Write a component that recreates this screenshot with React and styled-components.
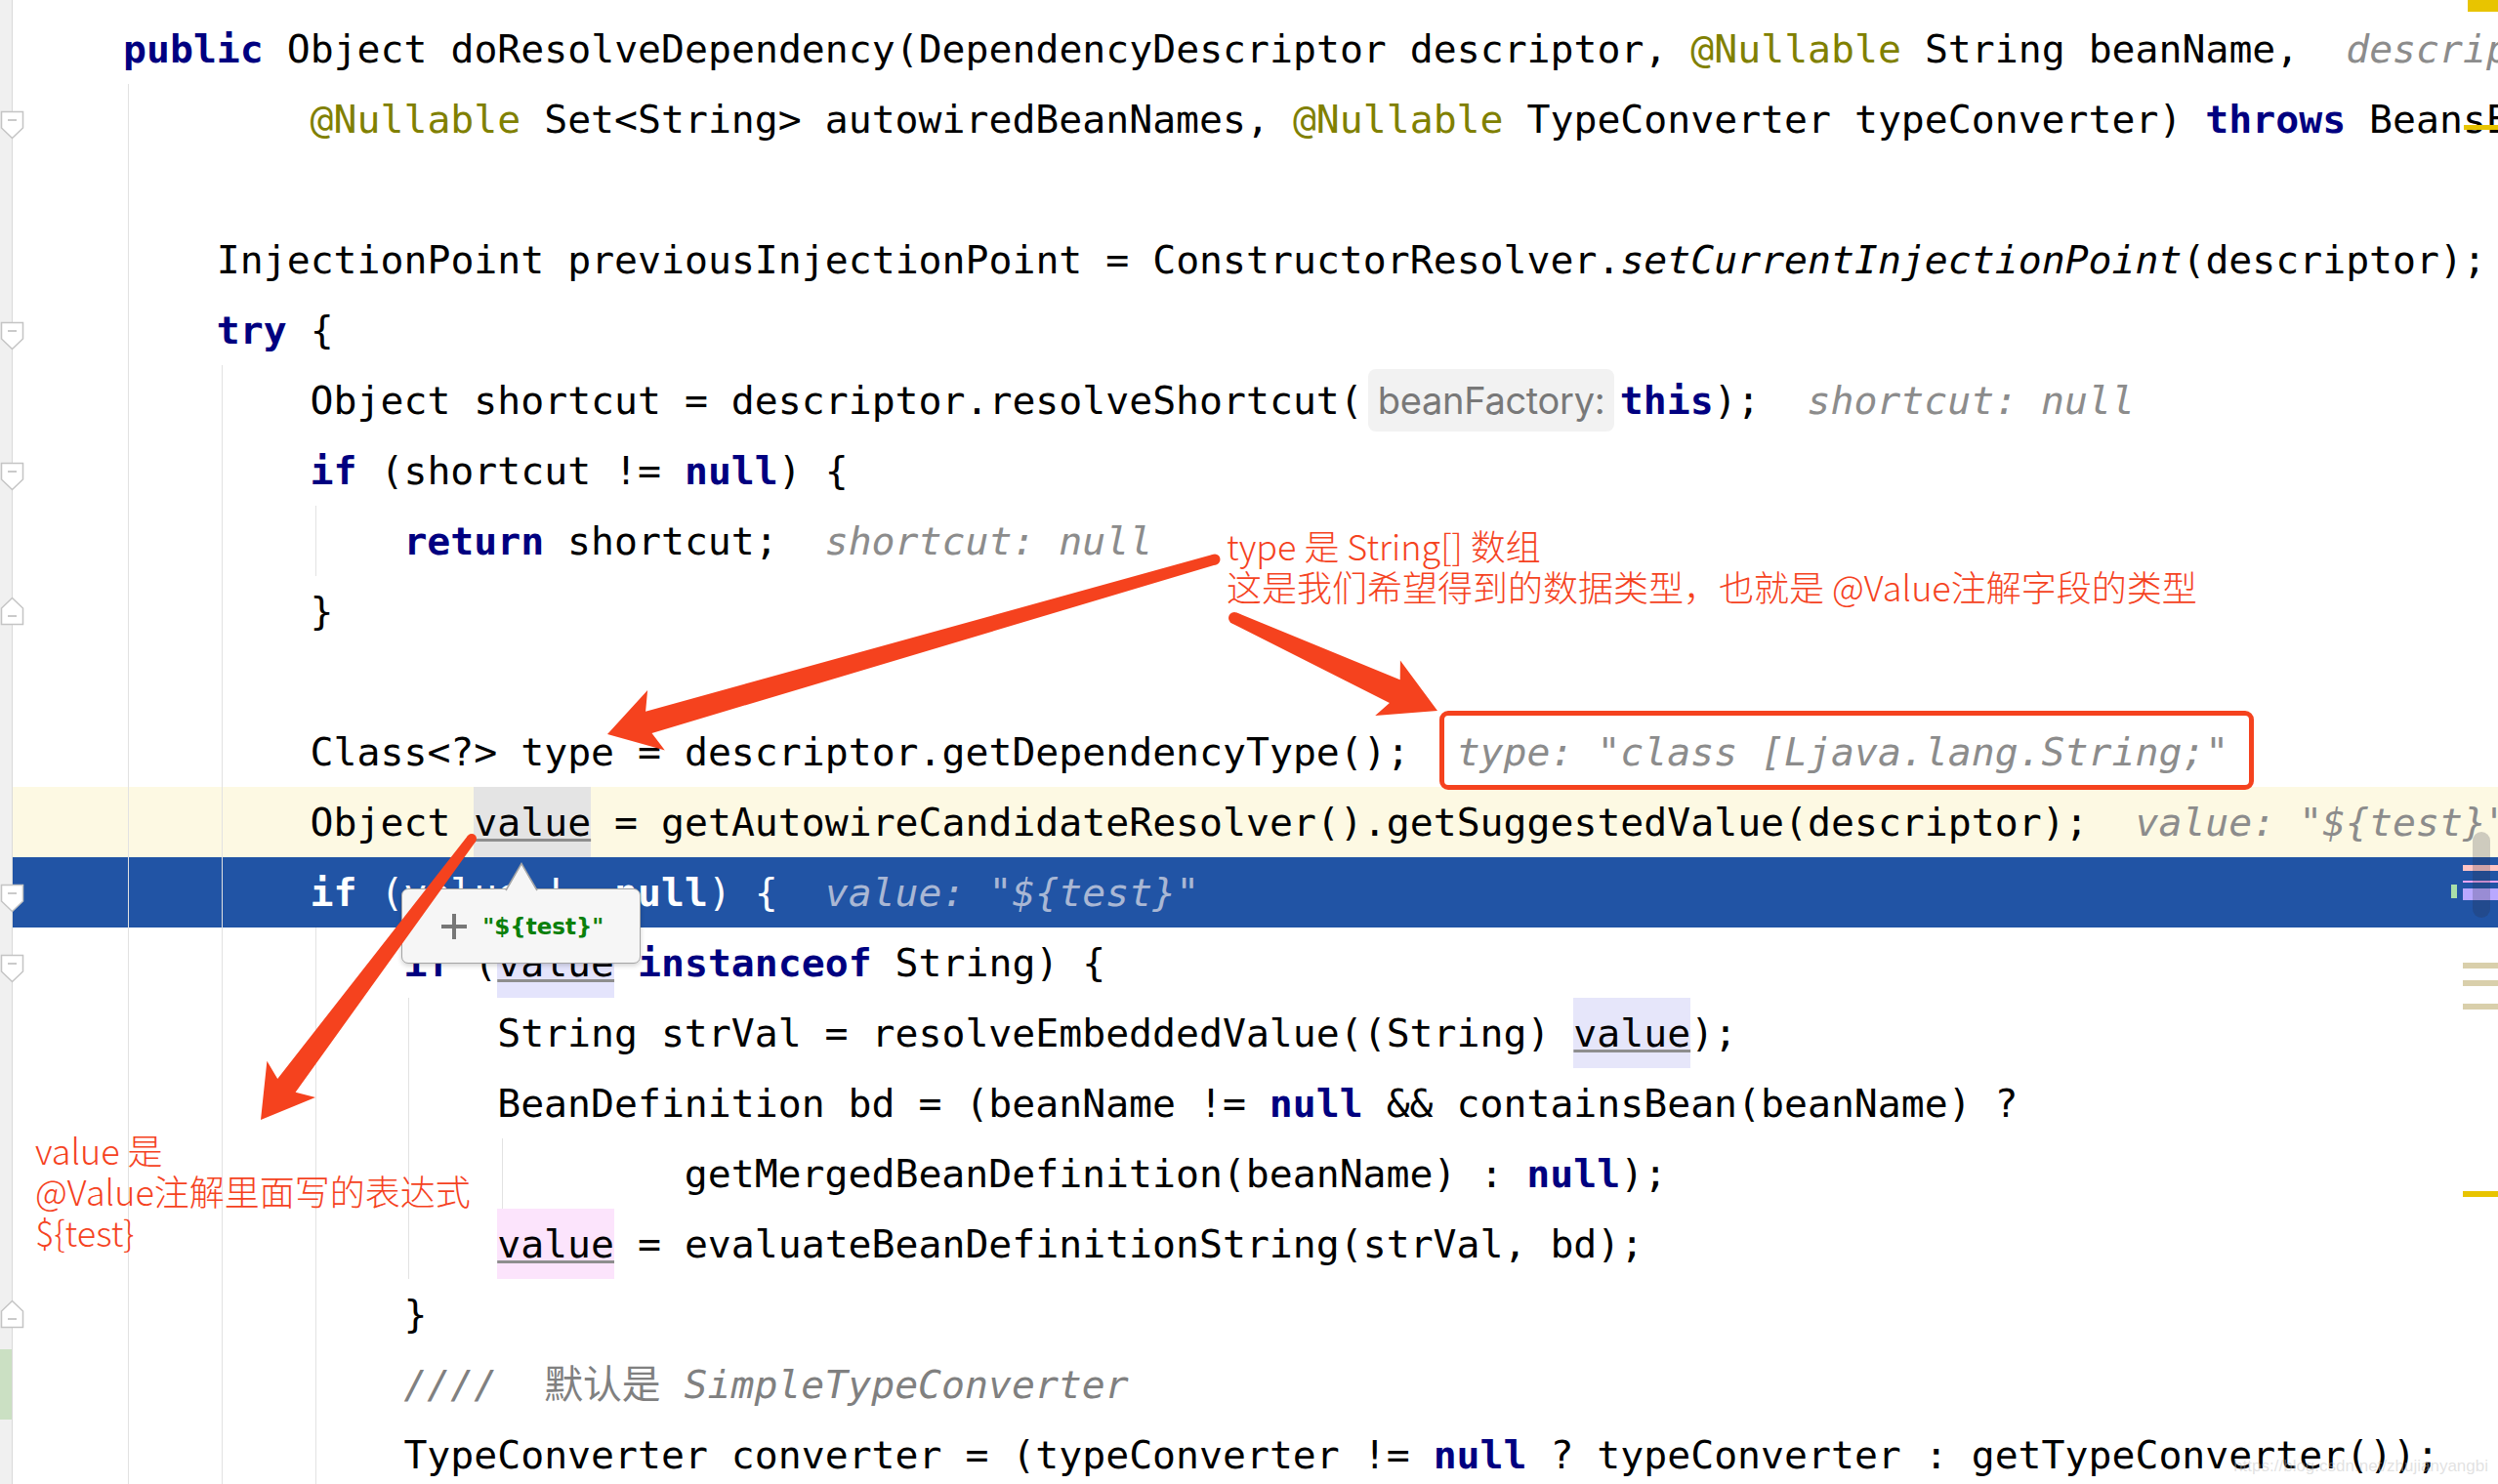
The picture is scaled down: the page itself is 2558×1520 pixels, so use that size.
import React from 'react';
import styled, { createGlobalStyle, css } from 'styled-components';

const MONO = `"DejaVu Sans Mono", "Noto Sans CJK SC", monospace`;
const NOTE_FONT = `"Noto Sans CJK SC", "Noto Sans", sans-serif`;
const RED = '#f5421e';

const GlobalStyle = createGlobalStyle`
  html, body {
    margin: 0;
    padding: 0;
    background: #fff;
  }
  body {
    width: 2558px;
    height: 1520px;
    overflow: hidden;
  }
`;

const Editor = styled.div`
  position: relative;
  width: 2558px;
  height: 1520px;
  overflow: hidden;
  box-sizing: border-box;
  padding-top: 14px;
  background: linear-gradient(to right, #f0f0f0 0 12px, #dadada 12px 13px, #fff 13px);
  font-family: ${MONO};
  font-size: 39.8px;
  color: #000;
`;

const Line = styled.div`
  display: flex;
  height: 72px;
`;

const GutterCell = styled.div`
  position: relative;
  flex: 0 0 13px;
  background: ${p => (p.$changed ? 'linear-gradient(to right, #cbe0c3 0 12px, transparent 12px)' : 'transparent')};
`;

const FoldMark = styled.svg`
  position: absolute;
  z-index: 2;
  left: 0;
  top: ${p => p.$top}px;
`;

const Kw = styled.span`
  font-weight: bold;
  color: #000080;
`;

const Ann = styled.span`
  color: #808000;
`;

const Ital = styled.span`
  font-style: italic;
`;

const Hint = styled.span`
  font-style: italic;
  color: #8c8c8c;
`;

const Comment = styled.span`
  font-style: italic;
  color: #808080;
`;

const Cjk = styled.span`
  font-style: normal;
`;

const Indent = styled.span`
  display: inline-block;
  vertical-align: top;
  box-sizing: border-box;
  width: 90.8px;
  height: 72px;
  margin-left: 5px;
  border-left: 1px solid ${p => (p.$guide ? '#e2e2e2' : 'transparent')};
`;

const CodeCell = styled.div`
  flex: 1;
  min-width: 0;
  padding-left: 113px;
  white-space: pre;
  line-height: 72px;
  background: ${p => (p.$mark === 'caret' ? '#fdf9e3' : p.$mark === 'exec' ? '#2154a5' : 'transparent')};
  ${p =>
    p.$mark === 'exec' &&
    css`
      color: #fff;
      ${Kw} {
        color: #fff;
      }
      ${Hint} {
        color: #a9b7d4;
      }
    `}
`;

const ParamHint = styled.span`
  display: inline-block;
  vertical-align: top;
  box-sizing: border-box;
  width: 252px;
  height: 64px;
  margin: 4px 6px 0 5px;
  padding-left: 10px;
  border-radius: 8px;
  background: #f2f2f2;
  font-family: Inter, "Noto Sans", sans-serif;
  font-size: 38px;
  line-height: 64px;
  letter-spacing: -0.3px;
  color: #787878;
`;

const BoxedHint = styled.span`
  position: relative;
  display: inline-block;
  vertical-align: top;
  font-style: italic;
  color: #8c8c8c;
  &::after {
    content: '';
    position: absolute;
    top: -6px;
    bottom: -3px;
    left: -18px;
    right: -26px;
    border: 5px solid ${RED};
    border-radius: 9px;
  }
`;

const Ref = styled.span`
  position: relative;
  display: inline-block;
  vertical-align: top;
  background: ${p => p.$bg};
  text-decoration: underline;
  text-decoration-color: #8e8e8e;
  text-decoration-thickness: 3px;
  text-underline-offset: 3px;
`;

const Tooltip = styled.div`
  position: absolute;
  z-index: 5;
  top: 104px;
  left: -74px;
  width: 245px;
  height: 77px;
  box-sizing: border-box;
  display: flex;
  align-items: center;
  gap: 16px;
  padding-left: 40px;
  background: #f6f6f6;
  border: 1.5px solid #a5a5a5;
  border-radius: 7px;
  box-shadow: 0 2px 5px rgba(0, 0, 0, 0.18);
  line-height: normal;
  white-space: nowrap;
`;

const TipPointer = styled.svg`
  position: absolute;
  left: 104px;
  top: -28.5px;
`;

const TipValue = styled.span`
  font-family: "DejaVu Sans", sans-serif;
  font-weight: bold;
  font-size: 23px;
  color: #0b800b;
`;

const Overlay = styled.svg`
  position: absolute;
  z-index: 10;
  left: 0;
  top: 0;
  pointer-events: none;
`;

const Note = styled.div`
  position: absolute;
  z-index: 11;
  left: ${p => p.$x}px;
  top: ${p => p.$y}px;
  font-family: ${NOTE_FONT};
  font-size: 36px;
  font-weight: 300;
  line-height: 42px;
  color: ${RED};
  white-space: pre;
`;

const Stripe = styled.div`
  position: absolute;
  z-index: 6;
  top: 0;
  right: 0;
  width: 48px;
  height: 100%;
`;

const Mark = styled.div`
  position: absolute;
  left: ${p => p.$x}px;
  top: ${p => p.$y}px;
  width: ${p => p.$w}px;
  height: ${p => p.$h}px;
  background: ${p => p.$c};
  border-radius: ${p => p.$r || 0}px;
`;

const Watermark = styled.div`
  position: absolute;
  z-index: 7;
  right: 10px;
  bottom: 8px;
  font-family: "Liberation Sans", Arial, sans-serif;
  font-size: 17px;
  color: rgba(190, 190, 190, 0.45);
`;

// token helpers
const K = s => ({ k: 'kw', s });
const A = s => ({ k: 'ann', s });
const I = s => ({ k: 'it', s });
const H = s => ({ k: 'hint', s });
const P = s => ({ k: 'param', s });
const B = s => ({ k: 'boxed', s });
const R = (s, bg, tip) => ({ k: 'ref', s, bg, tip });
const C = (s, cjk) => ({ k: 'cmt', s, cjk });

const LINES = [
  { indent: 0, guides: 0, tokens: [K('public'), ' Object doResolveDependency(DependencyDescriptor descriptor, ', A('@Nullable'), ' String beanName,  ', H('descriptor: DependencyDescriptor@1523  beanName: "test"')] },
  { indent: 2, guides: 1, fold: 'down', tokens: [A('@Nullable'), ' Set<String> autowiredBeanNames, ', A('@Nullable'), ' TypeConverter typeConverter) ', K('throws'), ' BeansException {'] },
  { indent: 0, guides: 1, tokens: [] },
  { indent: 1, guides: 1, tokens: ['InjectionPoint previousInjectionPoint = ConstructorResolver.', I('setCurrentInjectionPoint'), '(descriptor);'] },
  { indent: 1, guides: 1, fold: 'down', tokens: [K('try'), ' {'] },
  { indent: 2, guides: 2, tokens: ['Object shortcut = descriptor.resolveShortcut(', P('beanFactory:'), K('this'), ');  ', H('shortcut: null')] },
  { indent: 2, guides: 2, fold: 'down', tokens: [K('if'), ' (shortcut != ', K('null'), ') {'] },
  { indent: 3, guides: 3, tokens: [K('return'), ' shortcut;  ', H('shortcut: null')] },
  { indent: 2, guides: 2, fold: 'up', tokens: ['}'] },
  { indent: 0, guides: 2, tokens: [] },
  { indent: 2, guides: 2, tokens: ['Class<?> type = descriptor.getDependencyType();  ', B('type: "class [Ljava.lang.String;"')] },
  { indent: 2, guides: 2, mark: 'caret', tokens: ['Object ', R('value', '#e4e4e4', '"${test}"'), ' = getAutowireCandidateResolver().getSuggestedValue(descriptor);  ', H('value: "${test}"')] },
  { indent: 2, guides: 2, mark: 'exec', fold: 'down', tokens: [K('if'), ' (value != ', K('null'), ') {  ', H('value: "${test}"')] },
  { indent: 3, guides: 3, fold: 'down', tokens: [K('if'), ' (', R('value', '#e4e4fc'), ' ', K('instanceof'), ' String) {'] },
  { indent: 4, guides: 4, tokens: ['String strVal = resolveEmbeddedValue((String) ', R('value', '#e6e6fa'), ');'] },
  { indent: 4, guides: 4, tokens: ['BeanDefinition bd = (beanName != ', K('null'), ' && containsBean(beanName) ?'] },
  { indent: 6, guides: 5, tokens: ['getMergedBeanDefinition(beanName) : ', K('null'), ');'] },
  { indent: 4, guides: 4, tokens: [R('value', '#fce4fc'), ' = evaluateBeanDefinitionString(strVal, bd);'] },
  { indent: 3, guides: 3, fold: 'up', tokens: ['}'] },
  { indent: 3, guides: 3, changed: true, tokens: [C('////  '), C('默认是', true), C(' SimpleTypeConverter')] },
  { indent: 3, guides: 3, tokens: ['TypeConverter converter = (typeConverter != ', K('null'), ' ? typeConverter : getTypeConverter());'] },
];

function Fold({ dir }) {
  const down = dir === 'down';
  return (
    <FoldMark $top={down ? 27 : 21} width="25" height="30" viewBox="0 0 25 30">
      <path
        d={down ? 'M1.5 1.5 H23.5 V18 L12.5 28.5 L1.5 18 Z' : 'M1.5 28.5 H23.5 V12 L12.5 1.5 L1.5 12 Z'}
        fill="#fff"
        stroke="#c4c4c4"
        strokeWidth="1.5"
      />
      <line x1="8" x2="17" y1={down ? 10 : 20} y2={down ? 10 : 20} stroke="#b8b8b8" strokeWidth="1.5" />
    </FoldMark>
  );
}

function ValueTip({ text }) {
  return (
    <Tooltip>
      <TipPointer width="38" height="30" viewBox="0 0 38 30">
        <polygon points="2,30 18,1.5 34,30" fill="#f6f6f6" />
        <path d="M2 29 L18 1.5 L34 29" fill="none" stroke="#a5a5a5" strokeWidth="1.5" />
      </TipPointer>
      <svg width="26" height="26" viewBox="0 0 26 26">
        <rect x="0" y="11" width="26" height="4" fill="#777" />
        <rect x="11" y="0" width="4" height="26" fill="#777" />
      </svg>
      <TipValue>{text}</TipValue>
    </Tooltip>
  );
}

function Token({ t }) {
  if (typeof t === 'string') return t;
  switch (t.k) {
    case 'kw':
      return <Kw>{t.s}</Kw>;
    case 'ann':
      return <Ann>{t.s}</Ann>;
    case 'it':
      return <Ital>{t.s}</Ital>;
    case 'hint':
      return <Hint>{t.s}</Hint>;
    case 'param':
      return <ParamHint>{t.s}</ParamHint>;
    case 'boxed':
      return <BoxedHint>{t.s}</BoxedHint>;
    case 'cmt':
      return <Comment>{t.cjk ? <Cjk>{t.s}</Cjk> : t.s}</Comment>;
    case 'ref':
      return (
        <Ref $bg={t.bg}>
          {t.s}
          {t.tip && <ValueTip text={t.tip} />}
        </Ref>
      );
    default:
      return null;
  }
}

function CodeLine({ line }) {
  const units = [];
  const n = Math.max(line.indent, line.guides);
  for (let i = 0; i < n; i++) {
    units.push(<Indent key={i} $guide={i < line.guides} />);
  }
  return (
    <Line>
      <GutterCell $changed={line.changed}>{line.fold && <Fold dir={line.fold} />}</GutterCell>
      <CodeCell $mark={line.mark}>
        {units}
        {line.tokens.map((t, i) => (
          <Token key={i} t={t} />
        ))}
      </CodeCell>
    </Line>
  );
}

function arrowPoints([tx, ty], [px, py], tail, neck, headLen, headHalf, notch) {
  const dx = px - tx;
  const dy = py - ty;
  const len = Math.hypot(dx, dy);
  const ux = dx / len;
  const uy = dy / len;
  const nx = -uy;
  const ny = ux;
  const bx = px - ux * headLen;
  const by = py - uy * headLen;
  const kx = px - ux * (headLen - notch);
  const ky = py - uy * (headLen - notch);
  return [
    [tx + (nx * tail) / 2, ty + (ny * tail) / 2],
    [kx + (nx * neck) / 2, ky + (ny * neck) / 2],
    [bx + nx * headHalf, by + ny * headHalf],
    [px, py],
    [bx - nx * headHalf, by - ny * headHalf],
    [kx - (nx * neck) / 2, ky - (ny * neck) / 2],
    [tx - (nx * tail) / 2, ty - (ny * tail) / 2],
  ]
    .map(p => p.map(v => v.toFixed(1)).join(','))
    .join(' ');
}

const ARROWS = [
  { from: [1244, 573], to: [622, 752], tail: 11, neck: 23, headLen: 52, headHalf: 32, notch: 8 },
  { from: [1264, 633], to: [1472, 728], tail: 12, neck: 26, headLen: 56, headHalf: 31, notch: 8 },
  { from: [483, 859], to: [267, 1147], tail: 10, neck: 23, headLen: 52, headHalf: 31, notch: 8 },
];

function Arrows() {
  return (
    <Overlay width="2558" height="1520" viewBox="0 0 2558 1520">
      {ARROWS.map((a, i) => (
        <g key={i} fill={RED}>
          <polygon points={arrowPoints(a.from, a.to, a.tail, a.neck, a.headLen, a.headHalf, a.notch)} />
          <circle cx={a.from[0]} cy={a.from[1]} r={a.tail / 2} />
        </g>
      ))}
    </Overlay>
  );
}

const STRIPE_MARKS = [
  { x: 17, y: 0, w: 31, h: 12, c: '#e8c400' },
  { x: 13, y: 128, w: 35, h: 5, c: '#e8c400' },
  { x: 12, y: 886, w: 36, h: 6, c: '#ffc4c4' },
  { x: 12, y: 902, w: 36, h: 2, c: '#f2a6f2' },
  { x: 12, y: 910, w: 36, h: 12, c: '#b9a8ff' },
  { x: 0, y: 906, w: 6, h: 14, c: '#a9dfa9' },
  { x: 22, y: 852, w: 18, h: 88, c: 'rgba(40, 40, 60, 0.22)', r: 9 },
  { x: 12, y: 986, w: 36, h: 6, c: '#d9cfab' },
  { x: 12, y: 1004, w: 36, h: 6, c: '#d9cfab' },
  { x: 12, y: 1028, w: 36, h: 6, c: '#d9cfab' },
  { x: 12, y: 1220, w: 36, h: 6, c: '#e8c400' },
];

export default function App() {
  return (
    <>
      <GlobalStyle />
      <Editor>
        {LINES.map((line, i) => (
          <CodeLine key={i} line={line} />
        ))}
        <Stripe>
          {STRIPE_MARKS.map((m, i) => (
            <Mark key={i} $x={m.x} $y={m.y} $w={m.w} $h={m.h} $c={m.c} $r={m.r} />
          ))}
        </Stripe>
        <Arrows />
        <Note $x={1256} $y={537}>{'type 是 String[] 数组\n这是我们希望得到的数据类型，也就是 @Value注解字段的类型'}</Note>
        <Note $x={36} $y={1156}>{'value 是\n@Value注解里面写的表达式\n${test}'}</Note>
        <Watermark>https://blog.csdn.net/zhujianyangbi</Watermark>
      </Editor>
    </>
  );
}
